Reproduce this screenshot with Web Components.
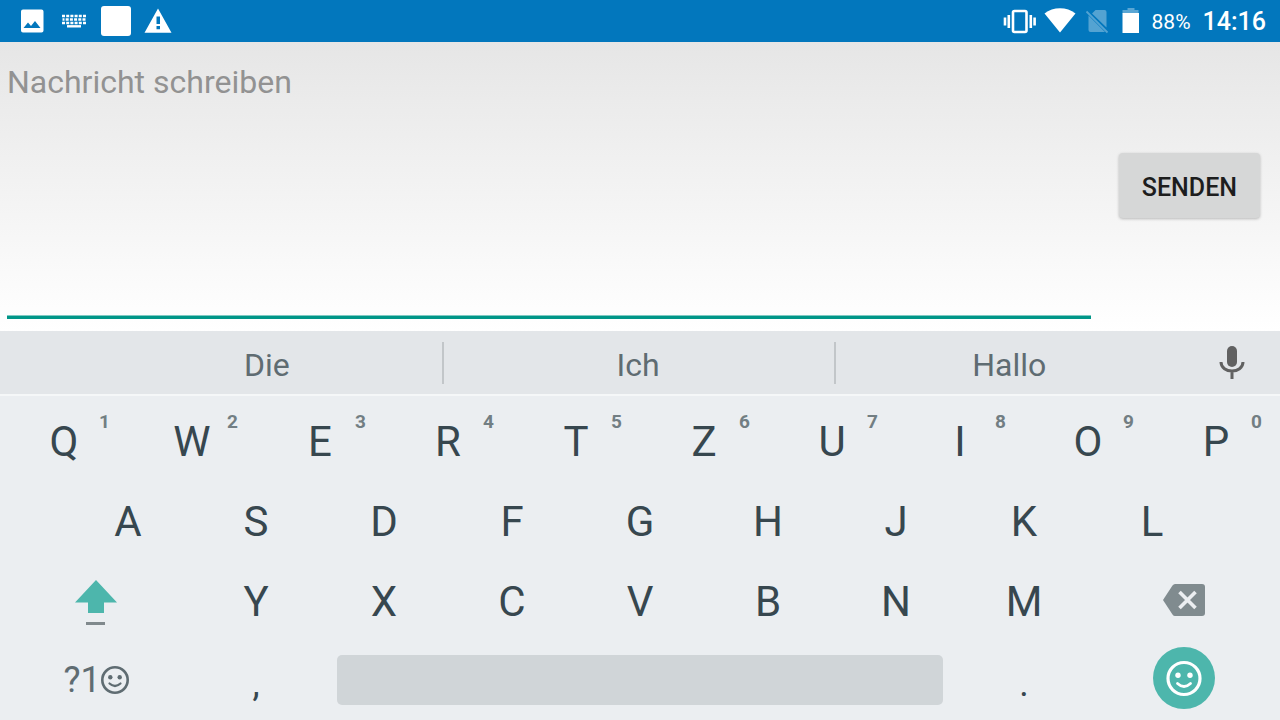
<!DOCTYPE html>
<html lang="de">
<head>
<meta charset="utf-8">
<meta name="viewport" content="width=device-width, initial-scale=1">
<title>Nachricht schreiben</title>
<style>
    body {
        margin: 0;
        min-height: 100vh;
        display: flex;
        flex-direction: column;
        font-family: Roboto, "Liberation Sans", sans-serif;
        --accent: #009688;
        --teal: #4db6ac;
        --key: #37474f;
        --key-soft: #5f6c72;
    }
    message-composer { flex: 1; }
</style>
</head>
<body>
<status-bar battery="88%" time="14:16"></status-bar>
<message-composer placeholder="Nachricht schreiben">Senden</message-composer>
<suggestion-strip words="Die,Ich,Hallo"></suggestion-strip>
<soft-keyboard></soft-keyboard>

<script>
// all status icons share the 42px height of the bar
const statusIcons = {
    image: [42, `<path fill="#fff" fill-rule="evenodd" d="M12 9.500h18.500a2 2 0 0 1 2 2v19a2 2 0 0 1-2 2h-18.500a2 2 0 0 1-2-2v-19a2 2 0 0 1 2-2zM12.500 28h17l-5.500-7-4 5-3-3.500z"/>`],
    keyboard: [42, `<g stroke="#fff" stroke-width="2.400" fill="none">
        <path stroke-dasharray="3 1.200" d="M9 16h24M9 23h24"/>
        <path stroke-dasharray="2 1.200 3 1.200 3 1.200 3 1.200 3 1.200 3 1.200" d="M9.500 19.500h23"/>
        <path d="M14 26.300h14"/></g>`],
    app: [42, `<rect x="6" y="6" width="30" height="30" rx="3" fill="#fff"/>`],
    warning: [42, `<path fill="#fff" fill-rule="evenodd" d="M21 8.500L34.500 32.800h-27zM19.500 16.500v7.500h3.500v-7.500zM19.500 26v3.300h3.500v-3.300z"/>`],
    vibrate: [40, `<g fill="none" stroke="#fff" stroke-width="2.600">
        <rect x="13" y="11" width="13.500" height="21" rx="1.500"/>
        <path d="M5 17.500v8M8.800 15v13M30.800 15v13M34.600 17.500v8"/></g>`],
    wifi: [40, `<path fill="#fff" d="M20 32.500L4.500 13.500C13 6.500 27 6.500 35.500 13.500z"/>`],
    nosim: [34, `<g opacity=".32"><path fill="#fff" d="M15.500 10h9a2 2 0 0 1 2 2v15.500L12 13.500zM8.500 15.500L25 32h-14.500a2 2 0 0 1-2-2z"/>
        <path stroke="#fff" stroke-width="1.800" d="M6.500 11.500l21 21"/></g>`],
    battery: [34, `<path fill="#fff" opacity=".35" d="M13.500 8h7v2h4v3.500h-16v-3.500h5z"/><path fill="#fff" d="M8.500 13h16.500v20h-16.500z"/>`]
}

class StatusBar extends HTMLElement {
    constructor() {
        super()
        this.attachShadow({ mode: 'open' })
    }

    icon(name) {
        const [width, shape] = statusIcons[name]
        return `<svg width="${width}" height="42" viewBox="0 0 ${width} 42" aria-hidden="true">${shape}</svg>`
    }

    connectedCallback() {
        this.shadowRoot.innerHTML = `
        <style>
            :host {
                display: flex;
                justify-content: space-between;
                height: 42px;
                padding: 0 14px 0 11px;
                background: #0277bd;
                color: #fff;
            }
            div { display: flex; }
            svg { display: block; }
            span { line-height: 44px; }
            .battery { font-size: 21px; margin: 0 12px 0 4px; }
            .time { font-size: 25px; font-weight: 500; }
        </style>
        <div>${['image', 'keyboard', 'app', 'warning'].map(this.icon).join('')}</div>
        <div>
            ${['vibrate', 'wifi', 'nosim', 'battery'].map(this.icon).join('')}
            <span class="battery">${this.getAttribute('battery')}</span>
            <span class="time">${this.getAttribute('time')}</span>
        </div>`
    }
}

class MessageComposer extends HTMLElement {
    constructor() {
        super()
        this.attachShadow({ mode: 'open' })
    }

    connectedCallback() {
        const placeholder = this.getAttribute('placeholder') ?? ''
        this.shadowRoot.innerHTML = `
        <style>
            :host {
                display: flex;
                align-items: center;
                gap: 28px;
                padding: 0 20px 0 7px;
                background: linear-gradient(#e6e6e6, #fff);
            }
            textarea {
                flex: 1;
                align-self: stretch;
                min-width: 0;
                box-sizing: border-box;
                margin: 0 0 12px;
                padding: 20px 0 0;
                border: 0;
                border-bottom: 3px solid var(--accent);
                border-radius: 0;
                box-shadow: inset 0 -1px rgba(0, 150, 136, .5);
                outline: 0;
                resize: none;
                background: none;
                font: 32px/40px Roboto, "Liberation Sans", sans-serif;
                color: #212121;
            }
            textarea::placeholder { color: #929292; opacity: 1; }
            button {
                height: 65px;
                margin-bottom: 2px;
                padding: 4px 23px 0;
                border: 0;
                border-radius: 4px;
                background: #d6d7d7;
                box-shadow: 0 1px 3px rgba(0, 0, 0, .25);
                font: 500 25px/32px Roboto, "Liberation Sans", sans-serif;
                text-transform: uppercase;
                color: #1d1d1d;
            }
        </style>
        <textarea aria-label="${placeholder}" placeholder="${placeholder}"></textarea>
        <button type="button"><slot></slot></button>`
    }
}

class SuggestionStrip extends HTMLElement {
    constructor() {
        super()
        this.attachShadow({ mode: 'open' })
    }

    connectedCallback() {
        const words = this.getAttribute('words').split(',')
        this.shadowRoot.innerHTML = `
        <style>
            :host {
                display: grid;
                grid-template-columns: 94px 8fr 2px 9fr 2px 8fr 96px;
                align-items: center;
                height: 63px;
                background: #e3e6e9;
                border-bottom: 2px solid #f5f7f8;
            }
            button {
                height: 63px;
                padding: 4px 2px 0 0;
                border: 0;
                background: none;
                font: 32px/40px Roboto, "Liberation Sans", sans-serif;
                color: var(--key-soft);
            }
            button:first-of-type { grid-column: 2; }
            i { height: 42px; background: #c2c6c9; }
            .mic { padding: 0; }
            svg { display: block; margin: auto; }
        </style>
        ${words.map(word => `<button type="button">${word}</button>`).join('<i></i>')}
        <button type="button" class="mic" aria-label="Spracheingabe">
            <svg width="28" height="36" viewBox="0 0 28 36">
                <rect x="9" y="1" width="10" height="21" rx="5" fill="#616161"/>
                <path d="M3 17c0 12 22 12 22 0M14 26v8" fill="none" stroke="#616161" stroke-width="3"/>
            </svg>
        </button>`
    }
}

// one key: the label comes in through the slot, hint is the small digit
class SoftKey extends HTMLElement {
    constructor() {
        super()
        this.attachShadow({ mode: 'open' })
    }

    connectedCallback() {
        const hint = this.getAttribute('hint')
        const name = this.getAttribute('name')
        this.shadowRoot.innerHTML = `
        <style>
            :host { display: block; position: relative; flex: 2 1 0; min-width: 0; }
            :host([wide]) { flex-grow: 3; }
            :host([space]) { display: grid; flex-grow: 10; }
            button {
                display: flex;
                align-items: center;
                justify-content: center;
                width: 100%;
                height: 80px;
                padding: 4px 0 0;
                border: 0;
                background: none;
                font: 42px/48px Roboto, "Liberation Sans", sans-serif;
                color: var(--key);
            }
            :host([wide]) button { padding: 0; }
            :host([punctuation]) button { padding-top: 8px; font-size: 36px; }
            :host([space]) button {
                width: auto;
                height: 50px;
                margin: 15px 17px;
                padding: 0;
                border-radius: 5px;
                background: #d0d5d8;
            }
            .hint {
                position: absolute;
                top: 10px;
                right: 18px;
                font: 700 19px/24px Roboto, "Liberation Sans", sans-serif;
                color: #727e83;
            }
        </style>
        <button type="button"${name ? ` aria-label="${name}"` : ''}><slot></slot></button>
        ${hint ? `<span class="hint">${hint}</span>` : ''}`
    }
}

class SoftKeyboard extends HTMLElement {
    constructor() {
        super()
        this.attachShadow({ mode: 'open' })
    }

    letters(text) {
        return [...text].map(letter => `<soft-key>${letter}</soft-key>`).join('')
    }

    connectedCallback() {
        const topRow = [...'QWERTZUIOP']
            .map((letter, i) => `<soft-key hint="${(i + 1) % 10}">${letter}</soft-key>`).join('')

        this.shadowRoot.innerHTML = `
        <style>
            :host { display: block; padding-top: 4px; background: #ebeef1; }
            .row { display: flex; }
            .row.inset { padding: 0 5%; }
            svg { display: block; }
            .symbols {
                display: flex;
                align-items: center;
                font-size: 36px;
                color: var(--key-soft);
            }
        </style>
        <div class="row">${topRow}</div>
        <div class="row inset">${this.letters('ASDFGHJKL')}</div>
        <div class="row">
            <soft-key wide name="Umschalt">
                <svg width="44" height="50" viewBox="0 0 44 50">
                    <path fill="#4db6ac" d="M22 5L43 27.500H30V38H14V27.500H1z"/>
                    <path fill="#80898d" d="M12 47h19v3h-19z"/>
                </svg>
            </soft-key>
            ${this.letters('YXCVBNM')}
            <soft-key wide name="Löschen">
                <svg width="44" height="34" viewBox="0 0 44 34">
                    <path fill="#808b8f" d="M13 1H40a3 3 0 0 1 3 3V30a3 3 0 0 1-3 3H13q-1.500 0-2.500-1.500L1 17L10.500 2.500Q11.500 1 13 1z"/>
                    <path stroke="#ebeef1" stroke-width="3.600" d="M17.500 9L33.500 25M33.500 9L17.500 25"/>
                </svg>
            </soft-key>
        </div>
        <div class="row">
            <soft-key wide>
                <span class="symbols">?1<svg width="28" height="28" viewBox="1 1 28 28">
                    <circle cx="15" cy="15" r="12.700" fill="none" stroke="#5f6c72" stroke-width="2.600"/>
                    <circle cx="10.300" cy="12.300" r="2.200" fill="#5f6c72"/>
                    <circle cx="19.700" cy="12.300" r="2.200" fill="#5f6c72"/>
                    <path d="M9.500 18.500q5.500 5 11 0" fill="none" stroke="#5f6c72" stroke-width="2.200" stroke-linecap="round"/>
                </svg></span>
            </soft-key>
            <soft-key punctuation>,</soft-key>
            <soft-key space name="Leertaste"></soft-key>
            <soft-key punctuation>.</soft-key>
            <soft-key wide name="Emoji">
                <svg width="62" height="66" viewBox="0 0 62 66">
                    <circle cx="31" cy="31" r="31" fill="#4db6ac"/>
                    <circle cx="31" cy="31.500" r="16" fill="none" stroke="#fff" stroke-width="3.200"/>
                    <circle cx="25" cy="28.300" r="2.700" fill="#fff"/>
                    <circle cx="37" cy="28.300" r="2.700" fill="#fff"/>
                    <path d="M24.500 36.500q6.500 6 13 0" fill="none" stroke="#fff" stroke-width="2.800" stroke-linecap="round"/>
                </svg>
            </soft-key>
        </div>`
    }
}

customElements.define('status-bar', StatusBar)
customElements.define('message-composer', MessageComposer)
customElements.define('suggestion-strip', SuggestionStrip)
customElements.define('soft-key', SoftKey)
customElements.define('soft-keyboard', SoftKeyboard)
</script>
</body>
</html>
